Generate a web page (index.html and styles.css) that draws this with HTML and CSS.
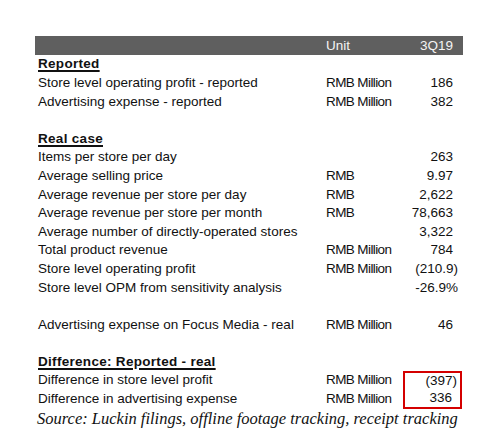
FILE: index.html
```html
<!DOCTYPE html>
<html>
<head>
<meta charset="utf-8">
<link rel="stylesheet" href="styles.css">
</head>
<body>
<div class="sheet">
  <div class="row head">
    <span></span><span class="unit">Unit</span><span class="val">3Q19</span>
  </div>
  <div class="row"><span class="sec">Reported</span></div>
  <div class="row"><span>Store level operating profit - reported</span><span class="unit">RMB Million</span><span class="val">186</span></div>
  <div class="row"><span>Advertising expense - reported</span><span class="unit">RMB Million</span><span class="val">382</span></div>
  <div class="row"></div>
  <div class="row"><span class="sec">Real case</span></div>
  <div class="row"><span>Items per store per day</span><span class="unit"></span><span class="val">263</span></div>
  <div class="row"><span>Average selling price</span><span class="unit">RMB</span><span class="val">9.97</span></div>
  <div class="row"><span>Average revenue per store per day</span><span class="unit">RMB</span><span class="val">2,622</span></div>
  <div class="row"><span>Average revenue per store per month</span><span class="unit">RMB</span><span class="val">78,663</span></div>
  <div class="row"><span>Average number of directly-operated stores</span><span class="unit"></span><span class="val">3,322</span></div>
  <div class="row"><span>Total product revenue</span><span class="unit">RMB Million</span><span class="val">784</span></div>
  <div class="row"><span>Store level operating profit</span><span class="unit">RMB Million</span><span class="val hang">(210.9)</span></div>
  <div class="row"><span>Store level OPM from sensitivity analysis</span><span class="unit"></span><span class="val hang">-26.9%</span></div>
  <div class="row"></div>
  <div class="row"><span>Advertising expense on Focus Media - real</span><span class="unit">RMB Million</span><span class="val">46</span></div>
  <div class="row"></div>
  <div class="row"><span class="sec">Difference: Reported - real</span></div>
  <div class="diff">
    <div class="diff-labels">
      <div class="row two"><span>Difference in store level profit</span><span class="unit">RMB Million</span></div>
      <div class="row two"><span>Difference in advertising expense</span><span class="unit">RMB Million</span></div>
    </div>
    <div class="box">
      <div class="bval hang">(397)</div>
      <div class="bval">336</div>
    </div>
  </div>
  <div class="source">Source: Luckin filings, offline footage tracking, receipt tracking</div>
</div>
</body>
</html>
```

FILE: styles.css
```css
html, body {
  margin: 0;
  padding: 0;
  background: #ffffff;
}
body {
  font-family: "Liberation Sans", Arial, sans-serif;
  font-size: 13.5px;
  color: #111111;
}
.sheet {
  width: 428px;
  margin-left: 35px;
  padding-top: 36px;
}
.row {
  display: grid;
  grid-template-columns: 288px 80px 1fr;
  height: 18.6px;
  align-items: center;
  line-height: 18.6px;
  white-space: nowrap;
}
.row > span:first-child {
  padding-left: 3px;
}
.head {
  background: #5f5f5f;
  color: #f4f4f4;
  height: 19.4px;
  line-height: 19.4px;
}
.unit {
  letter-spacing: -0.6px;
  padding-left: 3px;
}
.head .unit {
  letter-spacing: 0;
}
.val {
  text-align: right;
  padding-right: 10px;
}
.val.hang {
  padding-right: 5px;
}
.sec {
  font-weight: bold;
  text-decoration: underline;
  text-decoration-thickness: 1.5px;
  text-underline-offset: 2px;
  letter-spacing: 0.3px;
}
.diff {
  display: grid;
  grid-template-columns: 368px 1fr;
}
.row.two {
  grid-template-columns: 288px 80px;
}
.box {
  border: 2px solid #d40000;
  margin-left: 0;
  margin-right: 1px;
  height: 33.2px;
  display: flex;
  flex-direction: column;
  justify-content: center;
}
.bval {
  height: 16.6px;
  line-height: 16.6px;
  text-align: right;
  padding-right: 8px;
}
.bval.hang {
  padding-right: 3px;
}
.source {
  font-family: "Liberation Serif", "Times New Roman", serif;
  font-style: italic;
  font-size: 16.5px;
  color: #111111;
  padding-left: 2px;
  line-height: 19px;
  white-space: nowrap;
}
```
